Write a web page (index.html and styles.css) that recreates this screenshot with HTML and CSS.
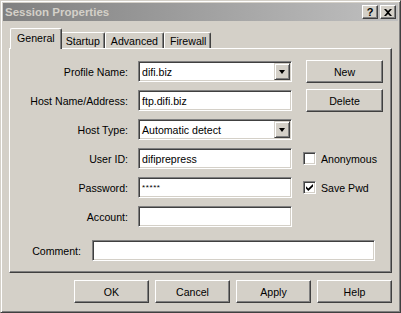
FILE: index.html
```html
<!DOCTYPE html>
<html>
<head>
<meta charset="utf-8">
<link rel="stylesheet" href="styles.css">
</head>
<body>
<div class="window">
  <div class="titlebar">
    <span class="title">Session Properties</span>
    <div class="tbtns">
      <span class="tbtn help">?</span>
      <span class="tbtn"><svg width="8" height="7" viewBox="0 0 8 7"><path d="M0 0h2l2 2 2-2h2L5 3.5 8 7H6L4 5 2 7H0l3-3.5z" fill="#000"/></svg></span>
    </div>
  </div>
  <div class="tabs">
    <span class="tab sel">General</span>
    <span class="tab">Startup</span>
    <span class="tab wide">Advanced</span>
    <span class="tab">Firewall</span>
  </div>
  <div class="panel">
    <div class="form">
      <span class="lbl">Profile Name:</span>
      <div class="field combo"><span class="val">difi.biz</span><span class="drop"><span class="arrow"></span></span></div>
      <button class="btn side">New</button>

      <span class="lbl">Host Name/Address:</span>
      <div class="field"><span class="val">ftp.difi.biz</span></div>
      <button class="btn side">Delete</button>

      <span class="lbl">Host Type:</span>
      <div class="field combo"><span class="val">Automatic detect</span><span class="drop"><span class="arrow"></span></span></div>
      <span></span>

      <span class="lbl">User ID:</span>
      <div class="field"><span class="val">difiprepress</span></div>
      <div class="check"><span class="box"></span><span>Anonymous</span></div>

      <span class="lbl">Password:</span>
      <div class="field"><span class="val pwd">*****</span></div>
      <div class="check"><span class="box"><svg width="7" height="7" viewBox="0 0 7 7"><path d="M0 2.2 2.3 4.5 7 0v2.4L2.3 7 0 4.6z" fill="#000"/></svg></span><span>Save Pwd</span></div>

      <span class="lbl">Account:</span>
      <div class="field"></div>
      <span></span>
    </div>
    <div class="comment-row">
      <span class="lbl clbl">Comment:</span>
      <div class="field cfield"></div>
    </div>
  </div>
  <div class="actions">
    <button class="btn act">OK</button>
    <button class="btn act">Cancel</button>
    <button class="btn act">Apply</button>
    <button class="btn act">Help</button>
  </div>
</div>
</body>
</html>
```

FILE: styles.css
```css
* { box-sizing: border-box; }
html, body { margin: 0; padding: 0; }
body {
  width: 401px;
  height: 313px;
  overflow: hidden;
  background: #d4d0c8;
  font-family: "Liberation Sans", Arial, sans-serif;
  font-size: 10.6px;
  color: #000;
}
.window {
  width: 401px;
  height: 313px;
  background: #d4d0c8;
  border: 1px solid;
  border-color: #d4d0c8 #404040 #404040 #d4d0c8;
  box-shadow: inset 1px 1px #fff, inset -1px -1px #808080;
  padding: 2px;
  display: flex;
  flex-direction: column;
}
.titlebar {
  height: 18px;
  flex: none;
  background: linear-gradient(to right, #808080, #c0c0c0);
  display: flex;
  align-items: center;
  justify-content: space-between;
  padding: 0 2px 0 2px;
}
.title {
  color: #d4d0c8;
  font-weight: bold;
  font-size: 11.5px;
}
.tbtns { display: flex; gap: 2px; }
.tbtn {
  width: 16px;
  height: 14px;
  background: #d4d0c8;
  border: 1px solid;
  border-color: #fff #404040 #404040 #fff;
  box-shadow: inset -1px -1px #808080;
  display: flex;
  align-items: center;
  justify-content: center;
}
.tbtn.help {
  font-weight: bold;
  font-size: 11px;
  line-height: 1;
}
.tabs {
  margin-top: 7px;
  height: 20px;
  flex: none;
  display: flex;
  align-items: flex-end;
  padding-left: 9px;
  position: relative;
  z-index: 1;
}
.tab {
  height: 16px;
  padding: 0 4px 0 5px;
  display: flex;
  align-items: center;
  border-top: 1px solid #fff;
  border-left: 1px solid #fff;
  border-right: 1px solid #404040;
  box-shadow: inset -1px 0 #808080;
  border-radius: 2px 2px 0 0;
  background: #d4d0c8;
}
.tab.wide { padding: 0 5px; }
.tab.sel {
  height: 21px;
  margin: 0 -2px -1px -2px;
  padding: 0 6px 3px 6px;
  position: relative;
  z-index: 2;
}
.panel {
  margin: 0 6px;
  height: 225px;
  flex: none;
  border: 1px solid;
  border-color: #fff #404040 #404040 #fff;
  box-shadow: inset -1px -1px #808080;
  padding-top: 12px;
}
.form {
  display: grid;
  grid-template-columns: 118px 154px 1fr;
  grid-template-rows: repeat(6, 21px);
  column-gap: 10px;
  row-gap: 8px;
}
.lbl {
  text-align: right;
  align-self: center;
  white-space: nowrap;
}
.field {
  height: 21px;
  background: #fff;
  border: 1px solid;
  border-color: #808080 #fff #fff #808080;
  box-shadow: inset 1px 1px #404040, inset -1px -1px #d4d0c8;
  display: flex;
  align-items: center;
  padding: 1px 1px 1px 3px;
}
.val { flex: 1; white-space: nowrap; }
.pwd { font-size: 8px; letter-spacing: 0.6px; }
.combo { padding-right: 1px; }
.drop {
  width: 16px;
  height: 17px;
  flex: none;
  background: #d4d0c8;
  border: 1px solid;
  border-color: #d4d0c8 #404040 #404040 #d4d0c8;
  box-shadow: inset 1px 1px #fff, inset -1px -1px #808080;
  display: flex;
  align-items: center;
  justify-content: center;
}
.arrow {
  width: 0;
  height: 0;
  border-left: 3.5px solid transparent;
  border-right: 3.5px solid transparent;
  border-top: 4px solid #000;
}
.btn {
  font: inherit;
  color: #000;
  background: #d4d0c8;
  border: 1px solid;
  border-color: #fff #404040 #404040 #fff;
  box-shadow: inset -1px -1px #808080;
  height: 23px;
  padding: 0;
  text-align: center;
}
.side {
  width: 77px;
  margin-left: 4px;
  align-self: center;
}
.check {
  display: flex;
  align-items: center;
  gap: 5px;
  margin-left: 1px;
}
.box {
  width: 13px;
  height: 13px;
  background: #fff;
  border: 1px solid;
  border-color: #808080 #fff #fff #808080;
  box-shadow: inset 1px 1px #404040, inset -1px -1px #d4d0c8;
  display: flex;
  align-items: center;
  justify-content: center;
}
.comment-row {
  margin-top: 13px;
  display: flex;
  align-items: center;
  gap: 11px;
}
.clbl { width: 71px; }
.cfield { width: 283px; }
.actions {
  margin-top: 7px;
  display: flex;
  justify-content: flex-end;
  gap: 6px;
  padding-right: 6px;
}
.act { width: 75px; }
```
